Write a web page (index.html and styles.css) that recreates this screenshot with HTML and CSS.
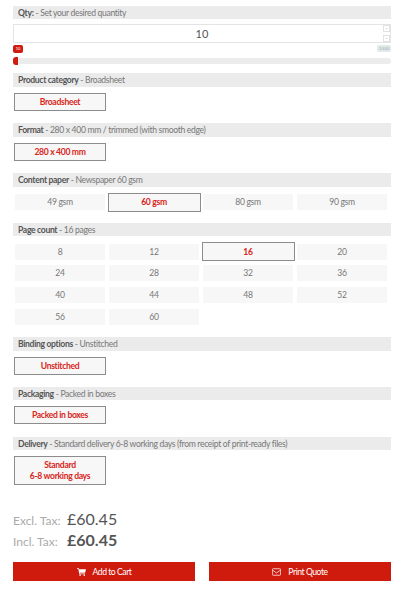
FILE: index.html
```html
<!DOCTYPE html>
<html lang="en">
<head>
<meta charset="utf-8">
<title>Product options</title>
<link rel="stylesheet" href="styles.css">
</head>
<body>
<main class="page">
  <section class="qty">
    <h2 class="bar"><b>Qty:</b> - Set your desired quantity</h2>
    <div class="qty-input">
      <span class="qty-value">10</span>
      <span class="spin"><i>-</i><i>-</i></span>
    </div>
    <div class="range-labels"><span class="range-from">10</span><span class="range-to">2,500</span></div>
    <div class="track"><span class="fill"></span></div>
  </section>

  <section class="group">
    <h2 class="bar"><b>Product category</b> - Broadsheet</h2>
    <div class="options"><button class="opt sel">Broadsheet</button></div>
  </section>

  <section class="group">
    <h2 class="bar"><b>Format</b> - 280 x 400 mm / trimmed (with smooth edge)</h2>
    <div class="options"><button class="opt sel">280 x 400 mm</button></div>
  </section>

  <section class="group">
    <h2 class="bar"><b>Content paper</b> - Newspaper 60 gsm</h2>
    <div class="options four">
      <button class="opt">49 gsm</button>
      <button class="opt sel">60 gsm</button>
      <button class="opt">80 gsm</button>
      <button class="opt">90 gsm</button>
    </div>
  </section>

  <section class="group">
    <h2 class="bar"><b>Page count</b> - 16 pages</h2>
    <div class="options four">
      <button class="opt">8</button>
      <button class="opt">12</button>
      <button class="opt sel">16</button>
      <button class="opt">20</button>
      <button class="opt">24</button>
      <button class="opt">28</button>
      <button class="opt">32</button>
      <button class="opt">36</button>
      <button class="opt">40</button>
      <button class="opt">44</button>
      <button class="opt">48</button>
      <button class="opt">52</button>
      <button class="opt">56</button>
      <button class="opt">60</button>
    </div>
  </section>

  <section class="group">
    <h2 class="bar"><b>Binding options</b> - Unstitched</h2>
    <div class="options"><button class="opt sel">Unstitched</button></div>
  </section>

  <section class="group">
    <h2 class="bar"><b>Packaging</b> - Packed in boxes</h2>
    <div class="options"><button class="opt sel">Packed in boxes</button></div>
  </section>

  <section class="group">
    <h2 class="bar"><b>Delivery</b> - Standard delivery 6-8 working days (from receipt of print-ready files)</h2>
    <div class="options"><button class="opt sel tall">Standard<br>6-8 working days</button></div>
  </section>

  <section class="prices">
    <div class="price"><span class="tax">Excl. Tax:</span><span class="amount">£60.45</span></div>
    <div class="price"><span class="tax">Incl. Tax:</span><strong class="amount">£60.45</strong></div>
  </section>

  <section class="actions">
    <button class="cta">
      <svg class="ico" viewBox="0 0 16 14" aria-hidden="true"><path fill="currentColor" d="M0 0h3l.5 2H16l-1.6 6.5H5l.3 1.3h9v1.2H4.2L2.2 1.2H0z"/><circle fill="currentColor" cx="5.5" cy="12.6" r="1.4"/><circle fill="currentColor" cx="13" cy="12.6" r="1.4"/></svg>
      Add to Cart
    </button>
    <button class="cta">
      <svg class="ico" viewBox="0 0 16 13" aria-hidden="true"><rect x=".7" y=".7" width="14.6" height="11.6" rx="1.4" fill="none" stroke="currentColor" stroke-width="1.3"/><path d="M1 3.2l7 5 7-5" fill="none" stroke="currentColor" stroke-width="1.3"/></svg>
      Print Quote
    </button>
  </section>
</main>
</body>
</html>
```
FILE: styles.css
```css
* { box-sizing: border-box; }
html, body { margin: 0; padding: 0; background: #fff; }
body { font-family: "Lato", sans-serif; color: #666; font-size: 8.6px; letter-spacing: -0.33px; }
.page { width: 378px; margin-left: 13px; padding-top: 6px; }
.bar {
  margin: 0; height: 13.3px; line-height: 14px; padding-left: 5px;
  background: #ebebeb; font-size: 8.6px; font-weight: 400; color: #777;
}
.bar b { color: #555; font-weight: 700; }

.qty-input {
  position: relative; margin-top: 5px; height: 19px; border: 1px solid #e4e4e4;
  display: flex; align-items: center; justify-content: center;
  font-size: 11px; color: #555; letter-spacing: 0;
}
.spin { position: absolute; right: 0; top: 0; bottom: 0; display: flex; flex-direction: column; justify-content: space-between; }
.spin i { display: block; width: 7px; height: 7px; border: 1px solid #e2e2e2; font-style: normal; font-size: 5px; line-height: 5px; text-align: center; color: #999; }
.range-labels { display: flex; justify-content: space-between; margin-top: 2px; height: 8px; letter-spacing: 0; }
.range-from { background: #d01c0f; color: #fff; font-size: 4px; line-height: 8px; width: 10px; height: 8px; border-radius: 2px; text-align: center; }
.range-to { background: #e3e8ea; color: #9aa; font-size: 4px; line-height: 7px; width: 14px; height: 7px; border-radius: 2px; text-align: center; }
.track { position: relative; margin-top: 5px; height: 6px; background: #ececec; border-radius: 3px; }
.fill { position: absolute; left: 0; top: -1px; width: 5px; height: 8px; background: #d01c0f; border-radius: 3px 0 0 3px; }

.group { margin-top: 9px; }
.group + .group { margin-top: 12.7px; }
.options { display: flex; flex-wrap: wrap; margin-top: 6px; padding-left: 1px; }
.four { display: grid; grid-template-columns: repeat(4, 90px); column-gap: 4px; row-gap: 5.67px; margin-top: 7.5px; padding-left: 2px; }
.opt {
  width: 92px; height: 18px; padding: 0; border: 0; background: #f7f7f7;
  font: inherit; font-size: 8.6px; letter-spacing: inherit; color: #777; text-align: center;
}
.four .opt { width: 90px; height: 16px; }
.opt.sel, .four .opt.sel { color: #d9251a; font-weight: 700; border: 1.5px solid #8c8c8c; }
.four .opt.sel { width: 93px; height: 19px; margin: -1.5px -1.5px; position: relative; }
.opt.tall { height: 29px; line-height: 11px; }

.prices { margin-top: 24px; letter-spacing: 0; }
.price { display: flex; align-items: baseline; height: 21px; }
.tax { width: 54px; font-size: 12px; color: #aaa; }
.amount { font-size: 16px; color: #555; font-weight: 400; }
strong.amount { font-weight: 700; }

.actions { display: flex; justify-content: space-between; margin-top: 11px; }
.cta {
  width: 182px; height: 19px; border: 0; padding: 0; background: #cf1b0e; color: #fff;
  font: inherit; font-size: 8.6px; letter-spacing: -0.45px; display: flex; align-items: center; justify-content: center; gap: 7px;
}
.ico { width: 9px; height: 8px; }
```
